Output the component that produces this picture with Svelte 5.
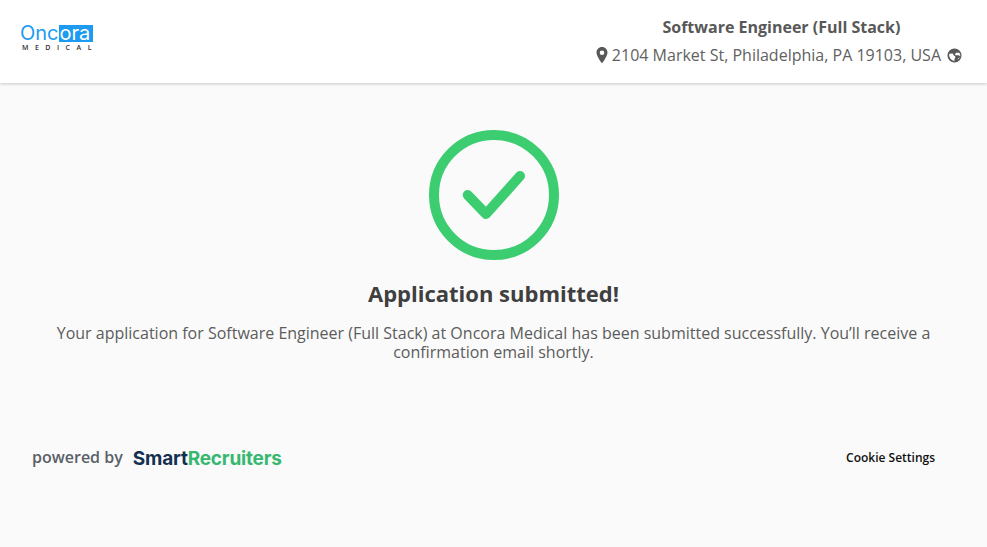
<script>
  const title = 'Software Engineer (Full Stack)';
</script>

<div class="page">
  <header class="header">
    <div class="logo" aria-label="Oncora Medical">
      <div class="logo-top"><span class="on">Onc</span><span class="ora">ora</span></div>
      <div class="logo-sub">MEDICAL</div>
    </div>
    <div class="job">
      <h2 class="job-title">{title}</h2>
      <div class="job-loc">
        <svg class="pin" viewBox="0 0 12 16" width="12" height="16"><path fill-rule="evenodd" d="M6 0C2.700 0 .5 2.600.5 5.700.5 8.400 3.800 13.300 5.200 15.400c.4.500 1.200.5 1.600 0C8.200 13.300 11.500 8.400 11.500 5.700 11.500 2.600 9.300 0 6 0zm0 8.100a2.300 2.300 0 1 1 0-4.600 2.300 2.300 0 0 1 0 4.600z"/></svg>
        <span class="addr">2104 Market St, Philadelphia, PA 19103, USA</span>
        <svg class="globe" viewBox="0 0 16 16" width="15" height="15"><path fill-rule="evenodd" d="M8 .5a7.500 7.500 0 1 0 0 15 7.500 7.500 0 0 0 0-15zM2.400 6.200 6 5.800l1.400 2.400 1.200.4.200 1.800-.9 1.600.2 1.800A6.200 6.200 0 0 1 2.400 6.200zM13 5.100H9.800L8.500 6.600l.6 1 3 .2 2 .7-.5 2.200h-1.500l-.9 1.900A6.200 6.200 0 0 0 14.200 8c0-1.100-.4-2.100-1.200-2.900z"/></svg>
      </div>
    </div>
  </header>

  <main class="main">
    <svg class="check" viewBox="0 0 130 130" width="130" height="130">
      <circle cx="65" cy="65" r="60" fill="none" stroke="#3ccd70" stroke-width="10"/>
      <path d="M38.700 65 L57 84 L91 46" fill="none" stroke="#3ccd70" stroke-width="10" stroke-linecap="round" stroke-linejoin="round"/>
    </svg>
    <h1 class="heading">Application submitted!</h1>
    <p class="message">Your application for Software Engineer (Full Stack) at Oncora Medical has been submitted successfully. You’ll receive a confirmation email shortly.</p>
  </main>

  <footer class="footer">
    <div class="powered">
      <span class="by">powered by</span>
      <span class="sr"><span class="smart">Smart</span><span class="recruiters">Recruiters</span></span>
    </div>
    <span class="cookie">Cookie Settings</span>
  </footer>
</div>

<style>
  :global(body) {
    margin: 0;
    background: #fafafa;
  }
  .page {
    width: 987px;
    height: 547px;
    overflow: hidden;
    background: #fafafa;
    font-family: "Open Sans", "Liberation Sans", sans-serif;
    color: #585858;
  }
  .header {
    height: 83px;
    box-sizing: border-box;
    background: #fff;
    box-shadow: 0 1px 3px rgba(0, 0, 0, 0.2);
    display: flex;
    justify-content: space-between;
    align-items: flex-start;
    padding: 0 25px 0 20px;
  }
  .logo {
    margin-top: 25px;
    width: 73px;
  }
  .logo-top {
    display: flex;
    font-family: Inter, "Noto Sans", sans-serif;
    font-size: 20px;
    font-weight: 400;
    line-height: 17px;
    height: 17px;
  }
  .on {
    color: #1d9bf0;
  }
  .ora {
    position: relative;
    color: #fff;
    background: #1d9bf0;
    flex: 1;
    padding-left: 1px;
  }
  .ora::after {
    content: "";
    position: absolute;
    left: 6px;
    top: 7px;
    width: 3px;
    height: 3px;
    border-radius: 50%;
    background: #1d9bf0;
  }
  .logo-sub {
    font-family: "Open Sans", sans-serif;
    font-size: 7px;
    font-weight: 600;
    line-height: 6px;
    height: 6px;
    color: #333;
    letter-spacing: 6.500px;
    margin: 3px 0 0 2px;
    white-space: nowrap;
  }
  .job {
    text-align: center;
    padding-top: 16px;
  }
  .job-title {
    margin: 0;
    padding-left: 5px;
    font-size: 16px;
    line-height: 22px;
    font-weight: 700;
    color: #585858;
  }
  .job-loc {
    margin-top: 6px;
    display: flex;
    align-items: center;
    gap: 5px;
    font-size: 16px;
    line-height: 22px;
    color: #616161;
  }
  .pin {
    margin-right: -1px;
  }
  .addr {
    margin-right: 1px;
  }
  .pin, .globe {
    fill: #585858;
    flex: none;
  }
  .main {
    display: flex;
    flex-direction: column;
    align-items: center;
    padding: 47px 40px 0;
  }
  .check {
    display: block;
  }
  .heading {
    margin: 18px 0 0;
    font-size: 22px;
    line-height: 30px;
    font-weight: 700;
    color: #3f3f3f;
  }
  .message {
    margin: 16px 0 0;
    font-size: 16px;
    line-height: 19px;
    text-align: center;
    color: #5c5c5c;
    width: 900px;
  }
  .footer {
    margin-top: 83px;
    display: flex;
    justify-content: space-between;
    align-items: center;
    padding: 0 52px 0 32px;
    height: 24px;
  }
  .powered {
    display: flex;
    align-items: center;
    gap: 10px;
  }
  .by {
    font-size: 16px;
    font-weight: 600;
    color: #5a6068;
  }
  .sr {
    font-family: Inter, "Open Sans", sans-serif;
    font-size: 19px;
    font-weight: 700;
    letter-spacing: -0.2px;
    margin-top: 2px;
  }
  .smart {
    color: #12304f;
  }
  .recruiters {
    color: #37b871;
  }
  .cookie {
    font-size: 12px;
    font-weight: 600;
    color: #111;
  }
</style>
